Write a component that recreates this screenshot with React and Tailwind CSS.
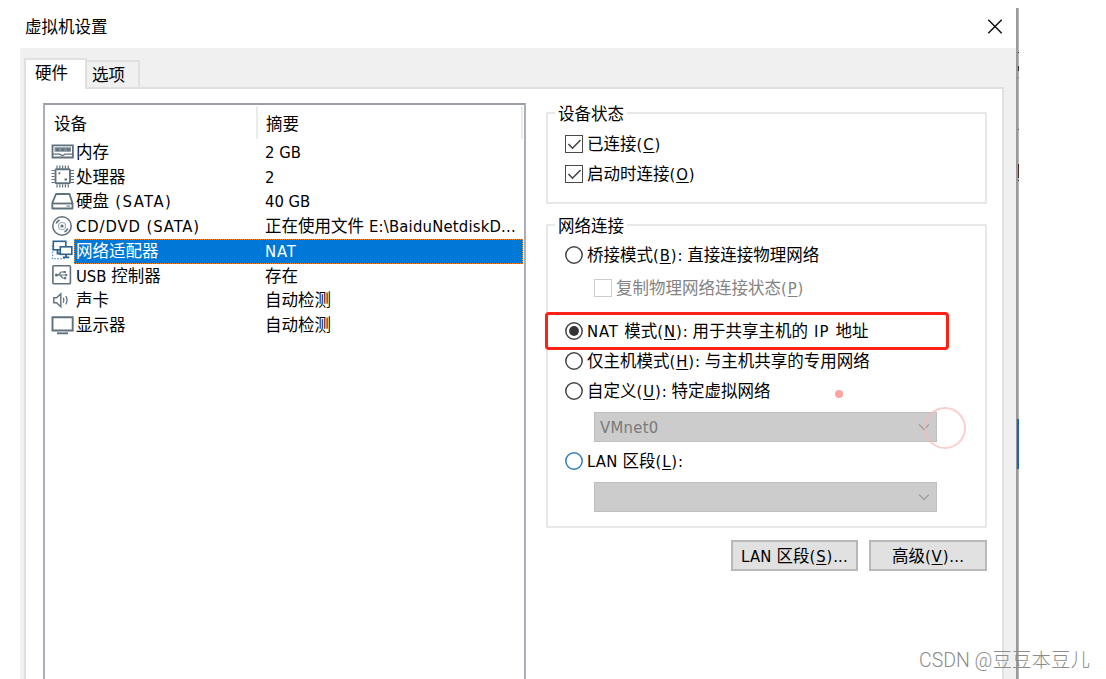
import React from "react";

const ICON = "#5f717d";

const Svg = ({ children, color = ICON }) => (
  <svg width="23" height="24" viewBox="0 0 23 24" fill="none" stroke={color} strokeWidth="1.8" className="shrink-0">
    {children}
  </svg>
);

const MemoryIcon = () => (
  <Svg>
    <path d="M1.500 5.300h20.400v12.200H1.500z" />
    <path d="M3.500 9.500h16.500" stroke="#82909a" strokeWidth="4.600" />
    <path d="M5 9.800h3M10.400 9.800h3M15.800 9.800h3" stroke={ICON} strokeWidth="2.600" />
    <path d="M3.500 12.500h16.500" stroke="#fff" strokeWidth="1" />
    <path d="M1.500 14.200h7.500l2.500 1.600 2.500-1.600h7.500" strokeWidth="1.300" />
  </Svg>
);

const CpuIcon = () => (
  <Svg>
    <rect x="4.500" y="4.300" width="14.500" height="14" rx="1" strokeWidth="1.900" />
    <path d="M6 .5v3M8.800.5v3M11.600.5v3M14.400.5v3M17.200.5v3M6 19.500v3M8.800 19.500v3M11.600 19.500v3M14.400 19.500v3M17.200 19.500v3" strokeWidth="1.200" />
    <path d="M.5 5.500h3M.5 8.500h3M.5 11.500h3M.5 14.500h3M.5 17.500h3M20 5.500h3M20 8.500h3M20 11.500h3M20 14.500h3M20 17.500h3" strokeWidth="1.200" />
    <path d="M7.500 8.300h1.800M13.500 14.500h2.500" strokeWidth="2" />
  </Svg>
);

const DiskIcon = () => (
  <Svg>
    <path d="M5 4h13.500l3 9.200v5.300H1.300v-5.300z" strokeLinejoin="round" />
    <path d="M1.300 13.500h20.400" />
    <path d="M15.500 16.100h3.500" strokeWidth="1" />
  </Svg>
);

const DiscIcon = () => (
  <Svg>
    <circle cx="11" cy="11" r="9.200" strokeWidth="1.500" />
    <circle cx="11" cy="11" r="3.500" stroke="#a3afb7" strokeWidth="1.200" />
    <circle cx="11" cy="11" r="1.600" fill={ICON} stroke="none" />
    <path d="M5.200 8.500c.8-1.800 1.800-2.800 3.300-3.400M16.800 13.500c-.8 1.800-1.800 2.800-3.300 3.400" strokeWidth="1.700" />
  </Svg>
);

const NetworkIcon = () => (
  <Svg color="#2b628f">
    <path d="M1.500 6.500v13.200h13" strokeDasharray="1.500 1.500" stroke="#5b9bd0" strokeWidth="1.300" />
    <rect x="2.300" y="2.300" width="12.500" height="8.500" fill="#fff" strokeWidth="1.600" />
    <path d="M6.500 11v3.500h3" strokeWidth="1.800" />
    <rect x="9.300" y="7.800" width="11.500" height="7.500" fill="#fff" strokeWidth="1.600" />
    <path d="M15 15.500v2.500M11.800 18.300h6.500" />
  </Svg>
);

const UsbIcon = () => (
  <Svg>
    <rect x="1.900" y="1.800" width="17.500" height="18" rx="1" strokeWidth="1.600" />
    <path d="M4 11h11.500M7.500 11l2.500-3h3M9 11l2.500 3h2.500" strokeWidth="1.200" />
    <circle cx="5.500" cy="11" r="1.600" fill={ICON} stroke="none" />
    <path d="M12.500 6.900h2.200v2.200h-2.200zM13 13h2.200v2.200H13zM14.500 9.300l2.500 1.700-2.500 1.700z" fill={ICON} stroke="none" />
  </Svg>
);

const SoundIcon = () => (
  <Svg>
    <path d="M2.800 8.800v5h2.700l4.300 3.900V4.900L5.500 8.800z" strokeWidth="1.400" />
    <path d="M12.300 8.800c.8 1.600.8 3.400 0 5M14.800 7.200c1.600 2.600 1.600 5.600 0 8.200" strokeWidth="1.300" />
  </Svg>
);

const DisplayIcon = () => (
  <Svg>
    <path d="M1.500 3.300h20.200v13.200H1.500z" strokeWidth="1.900" />
    <path d="M6 19.300h11" strokeWidth="1.900" />
    <path d="M9.500 17.700h4" stroke="#b5bec4" strokeWidth="1.500" />
  </Svg>
);

const devices = [
  { icon: MemoryIcon, name: "内存", summary: "2 GB" },
  { icon: CpuIcon, name: "处理器", summary: "2" },
  { icon: DiskIcon, name: "硬盘 (SATA)", summary: "40 GB" },
  { icon: DiscIcon, name: "CD/DVD (SATA)", summary: "正在使用文件 E:\\BaiduNetdiskD..." },
  { icon: NetworkIcon, name: "网络适配器", summary: "NAT", selected: true },
  { icon: UsbIcon, name: "USB 控制器", summary: "存在" },
  { icon: SoundIcon, name: "声卡", summary: "自动检测" },
  { icon: DisplayIcon, name: "显示器", summary: "自动检测" },
];

const latinSpacing = (part) => {
  if (part.startsWith(" (SATA)")) return "tracking-[1.5px]";
  if (part === " IP ") return "tracking-[1.2px]";
  if (/NAT|CD\//.test(part)) return "tracking-[0.9px]";
  if (/LAN|\.\.\./.test(part)) return "tracking-[0.2px]";
  return "";
};

const Mixed = ({ text }) =>
  text.split(/([\x20-\x7e]+)/).filter(Boolean).map((part, i) => (
    <span key={i} className={/^[\x20-\x7e]/.test(part) ? latinSpacing(part) : ""}>{part}</span>
  ));

const Label = ({ before, hotkey, after = "" }) => (
  <span className="whitespace-pre pt-[2px]">
    <Mixed text={before} />
    <span className="tracking-[0.9px]">(<span className="underline decoration-1 underline-offset-2">{hotkey}</span>)</span>
    <Mixed text={after} />
  </span>
);

const Checkbox = ({ checked, disabled }) => (
  <span className={`flex size-[18px] shrink-0 items-center justify-center border-[1.5px] bg-white ${disabled ? "border-[#cccccc]" : "border-[#4a4a4a]"}`}>
    {checked && (
      <svg width="15" height="15" viewBox="0 0 15 15" fill="none" stroke="#444" strokeWidth="1.6">
        <path d="M1.500 7l4 4.200 8-8.200" />
      </svg>
    )}
  </span>
);

const Radio = ({ checked, hot }) => (
  <svg width="18" height="18" viewBox="0 0 18 18" className="shrink-0">
    <circle cx="9" cy="9" r="8.200" fill="#fff" stroke={hot ? "#2f7fc1" : "#444"} strokeWidth="1.500" />
    {checked && <circle cx="9" cy="9" r="4.900" fill="#333" />}
  </svg>
);

const Select = ({ value }) => (
  <div className="ml-[46px] flex h-[30px] w-[343px] items-center justify-between border border-[#bfbfbf] bg-[#cccccc] pl-[5px] pr-[6px] text-[#7a7a7a]">
    <span className="pt-[2px] tracking-[0.3px]">{value}</span>
    <svg width="12" height="12" viewBox="0 0 12 12" fill="none" stroke="#a0a0a0" strokeWidth="1.400">
      <path d="M1 3.500l5 5 5-5" />
    </svg>
  </div>
);

const Group = ({ title, className, children }) => (
  <fieldset className={`w-[441px] border-2 border-[#e8e8e8] ${className}`}>
    <legend className="ml-[7px] h-[22px] px-[3px] leading-[25px]">{title}</legend>
    {children}
  </fieldset>
);

const Option = ({ children, className = "" }) => (
  <div className={`flex h-[30px] items-center gap-[4px] pl-[17px] ${className}`}>{children}</div>
);

export default function App() {
  return (
    <div className="relative flex h-[679px] w-[1106px] overflow-hidden bg-white pl-[20px] pt-[8px] font-['DejaVu_Sans_Condensed','Noto_Sans_CJK_SC',sans-serif] text-[16.5px] leading-[24px] text-black">
      <div className="flex w-[996px] shrink-0 flex-col">
        <header className="flex h-[40px] shrink-0 items-center justify-between pb-[3px] pl-[5px] pr-[13px]">
          <h1 className="pt-[2px]">虚拟机设置</h1>
          <svg width="16" height="16" viewBox="0 0 16 16" fill="none" stroke="#111" strokeWidth="1.500">
            <path d="M1.300.8l13.400 13.400M14.700.8L1.300 14.200" />
          </svg>
        </header>

        <div className="flex grow flex-col bg-[#f0f0f0] pl-[4px] pr-[12px] pt-[10px]">
          <nav className="flex h-[29px] shrink-0 items-end">
            <div className="z-10 -mb-[2px] h-[31px] w-[63px] border-x-2 border-t-2 border-[#e0e0e0] bg-white pl-[9px] leading-[27px]">硬件</div>
            <div className="h-[27px] w-[53px] border-r-2 border-t-2 border-[#e0e0e0] pl-[5px] leading-[28px]">选项</div>
          </nav>

          <div className="flex grow border-x-2 border-t-2 border-[#e0e0e0] bg-white pl-[17px] pt-[14px]">
            <section className="w-[483px] shrink-0 border-x-2 border-t-2 border-x-[#abb0b7] border-t-[#9a9ea7]">
              <div className="flex h-[35px] items-center">
                <div className="flex h-[33px] w-[213px] items-center border-r-2 border-[#ececec] pl-[9px] pt-[4px]">设备</div>
                <div className="flex h-[33px] w-[265px] items-center border-r-2 border-[#ececec] pl-[8px] pt-[4px]">摘要</div>
              </div>
              {devices.map(({ icon: Icon, name, summary, selected }) => (
                <div key={name} className="flex h-[24.750px] items-center pl-[6px]">
                  <Icon />
                  <div className={`flex h-[24.750px] w-[449px] items-center whitespace-pre pt-px ${selected ? "border border-dotted border-[#f08a2c] bg-[#0078d7] pl-px text-white" : "pl-[2px]"}`}>
                    <span className="w-[189px]"><Mixed text={name} /></span>
                    <span><Mixed text={summary} /></span>
                  </div>
                </div>
              ))}
            </section>

            <section className="ml-[20px] flex w-[441px] flex-col">
              <Group title="设备状态" className="-mt-px h-[102px] shrink-0">
                <div className="pt-[5px]">
                  <Option><Checkbox checked /><Label before="已连接" hotkey="C" /></Option>
                  <Option><Checkbox checked /><Label before="启动时连接" hotkey="O" /></Option>
                </div>
              </Group>

              <Group title="网络连接" className="mt-[10px] h-[314px] shrink-0">
                <div className="pt-[4px]">
                  <Option><Radio /><Label before="桥接模式" hotkey="B" after=": 直接连接物理网络" /></Option>
                  <Option className="mb-[10px] h-[36px] pl-[46px] text-[#838383]"><Checkbox disabled /><Label before="复制物理网络连接状态" hotkey="P" /></Option>
                  <Option><Radio checked /><Label before="NAT 模式" hotkey="N" after=": 用于共享主机的 IP 地址" /></Option>
                  <Option><Radio /><Label before="仅主机模式" hotkey="H" after=": 与主机共享的专用网络" /></Option>
                  <Option><Radio /><Label before="自定义" hotkey="U" after=": 特定虚拟网络" /></Option>
                  <div className="pt-[6px]"><Select value="VMnet0" /></div>
                  <Option className="mt-[4px]"><Radio hot /><Label before="LAN 区段" hotkey="L" after=":" /></Option>
                  <div className="pt-[6px]"><Select value="" /></div>
                </div>
              </Group>

              <div className="mt-[12px] flex justify-end gap-[11px]">
                <button className="flex h-[31px] w-[127px] items-center justify-center border-2 border-[#b8b8b8] bg-[#e1e1e1]"><Label before="LAN 区段" hotkey="S" after="..." /></button>
                <button className="flex h-[31px] w-[118px] items-center justify-center border-2 border-[#b8b8b8] bg-[#e1e1e1]"><Label before="高级" hotkey="V" after="..." /></button>
              </div>
            </section>
          </div>
        </div>
      </div>

      {/* sliver of the window behind */}
      <div className="flex w-[3px] shrink-0 flex-col border-l-2 border-[#999999] bg-[#b8b8b8]">
        <div className="mt-[44px] h-px bg-[#333]" />
        <div className="mt-[13px] h-[5px] bg-[#333]" />
        <div className="mt-[6px] h-px bg-[#6b7f8c]" />
        <div className="mt-[51px] h-px bg-[#666]" />
        <div className="mt-[34px] h-[14px] bg-[#4b2822]" />
        <div className="mt-[2px] h-px bg-[#333]" />
        <div className="-ml-px mt-[238px] h-[50px] bg-[#1f5fc4]" />
      </div>

      {/* annotations */}
      <div className="absolute left-[545px] top-[312px] h-[38px] w-[404px] rounded-[4px] border-[3.500px] border-[#fd2015]" />
      <div className="absolute left-[835px] top-[390px] size-[8px] rounded-full bg-[#ffa39f]" />
      <div className="absolute left-[924px] top-[407px] size-[42px] rounded-full border-2 border-[#f8b9b6]/70" />
      <div className="absolute left-[919px] top-[649px] whitespace-pre font-['Roboto','Noto_Sans_CJK_SC',sans-serif] text-[19.500px] font-light text-[#8c8c8c]">CSDN @豆豆本豆儿</div>
    </div>
  );
}
